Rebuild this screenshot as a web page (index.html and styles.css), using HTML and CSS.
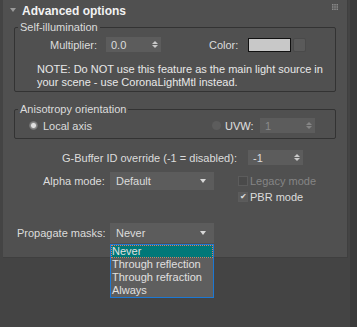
FILE: index.html
```html
<!DOCTYPE html>
<html>
<head>
<meta charset="utf-8">
<link rel="stylesheet" href="styles.css">
</head>
<body>
<div class="screen">
  <div class="panel">
    <div class="header">
      <span class="caret"></span>
      <span class="title">Advanced options</span>
      <svg class="grip" width="6" height="6" viewBox="0 0 6 6">
        <rect x="0" y="0" width="1.5" height="1.5" fill="#8a8a8a"/><rect x="2.25" y="0" width="1.5" height="1.5" fill="#8a8a8a"/><rect x="4.5" y="0" width="1.5" height="1.5" fill="#8a8a8a"/>
        <rect x="0" y="2.25" width="1.5" height="1.5" fill="#8a8a8a"/><rect x="2.25" y="2.25" width="1.5" height="1.5" fill="#8a8a8a"/><rect x="4.5" y="2.25" width="1.5" height="1.5" fill="#8a8a8a"/>
        <rect x="0" y="4.5" width="1.5" height="1.5" fill="#8a8a8a"/><rect x="2.25" y="4.5" width="1.5" height="1.5" fill="#8a8a8a"/><rect x="4.5" y="4.5" width="1.5" height="1.5" fill="#8a8a8a"/>
      </svg>
    </div>

    <fieldset class="group group-self">
      <legend>Self-illumination</legend>
      <div class="row row-mult">
        <span class="label lbl-mult">Multiplier:</span>
        <div class="spinner sp-mult"><span>0.0</span><span class="arrows"><i class="up"></i><i class="down"></i></span></div>
        <span class="label lbl-color">Color:</span>
        <div class="swatch"></div>
        <div class="mapbtn"></div>
      </div>
      <p class="note">NOTE: Do NOT use this feature as the main light source in<br>your scene - use CoronaLightMtl instead.</p>
    </fieldset>

    <fieldset class="group group-aniso">
      <legend>Anisotropy orientation</legend>
      <div class="row row-aniso">
        <span class="radio on"></span>
        <span class="label lbl-local">Local axis</span>
        <span class="radio off"></span>
        <span class="label lbl-uvw">UVW:</span>
        <div class="spinner sp-uvw disabled"><span>1</span><span class="arrows"><i class="up"></i><i class="down"></i></span></div>
      </div>
    </fieldset>

    <div class="row row-gbuf">
      <span class="label lbl-gbuf">G-Buffer ID override (-1 = disabled):</span>
      <div class="spinner sp-gbuf"><span>-1</span><span class="arrows"><i class="up"></i><i class="down"></i></span></div>
    </div>

    <div class="row row-alpha">
      <span class="label lbl-alpha">Alpha mode:</span>
      <div class="combo combo-alpha"><span>Default</span><i class="tri"></i></div>
      <div class="checks">
        <div class="check-row disabled"><span class="box"></span><span>Legacy mode</span></div>
        <div class="check-row"><span class="box checked">&#10004;</span><span>PBR mode</span></div>
      </div>
    </div>

    <div class="row row-prop">
      <span class="label lbl-prop">Propagate masks:</span>
      <div class="combo-wrap">
        <div class="combo combo-prop"><span>Never</span><i class="tri"></i></div>
        <ul class="dropdown">
          <li class="sel">Never</li>
          <li>Through reflection</li>
          <li>Through refraction</li>
          <li>Always</li>
        </ul>
      </div>
    </div>
  </div>
  <div class="strip"></div>
</div>
</body>
</html>
```

FILE: styles.css
```css
html, body {
  margin: 0;
  padding: 0;
  background: #444444;
}
body {
  width: 357px;
  height: 327px;
  overflow: hidden;
  font-family: "Liberation Sans", Arial, sans-serif;
  font-size: 11px;
  color: #dcdcdc;
}
.screen {
  display: flex;
  height: 327px;
}
.panel {
  margin-left: 3px;
  width: 345px;
  height: 258px;
  background: #505050;
  border-right: 1px solid #3f3f3f;
  border-bottom: 1px solid #3f3f3f;
  box-sizing: border-box;
}
.strip {
  margin-left: 2px;
  width: 7px;
  height: 327px;
  background: #3a3a3a;
}
.header {
  display: flex;
  align-items: center;
  height: 21px;
  padding-left: 7px;
}
.caret {
  width: 0;
  height: 0;
  border-left: 3px solid transparent;
  border-right: 3px solid transparent;
  border-top: 4px solid #9a9a9a;
  margin-right: 6px;
  margin-top: -1px;
}
.title {
  font-weight: bold;
  font-size: 12px;
  color: #f2f2f2;
  flex: 1;
  margin-top: 1px;
}
.grip {
  margin-right: 9px;
  margin-top: -8px;
}
.group {
  margin: 0 0 0 11px;
  width: 322px;
  box-sizing: border-box;
  border: 1px solid #333333;
  border-radius: 2px;
  padding: 0;
}
.group legend {
  padding: 0 2px;
  margin-left: 3px;
  line-height: 13px;
  color: #dcdcdc;
}
.group-self {
  height: 71px;
}
.row {
  display: flex;
  align-items: center;
}
.label {
  white-space: nowrap;
}
.row-mult {
  margin-top: 3px;
  height: 15px;
}
.lbl-mult { margin-left: 35px; width: 56px; }
.spinner {
  display: flex;
  align-items: center;
  justify-content: space-between;
  height: 15px;
  background: #5c5c5c;
  box-sizing: border-box;
  padding: 0 3px 0 5px;
  color: #dcdcdc;
}
.spinner.disabled { color: #8a8a8a; }
.arrows {
  display: flex;
  flex-direction: column;
  gap: 1px;
}
.arrows i {
  display: block;
  width: 0;
  height: 0;
  border-left: 3px solid transparent;
  border-right: 3px solid transparent;
}
.arrows .up { border-bottom: 3px solid #c8c8c8; }
.arrows .down { border-top: 3px solid #c8c8c8; }
.spinner.disabled .arrows .up { border-bottom-color: #858585; }
.spinner.disabled .arrows .down { border-top-color: #858585; }
.sp-mult { width: 55px; }
.lbl-color { margin-left: 48px; width: 39px; }
.swatch {
  width: 43px;
  height: 14px;
  box-sizing: border-box;
  border: 1px solid #111;
  background: #c8c8c8;
}
.mapbtn {
  width: 13px;
  height: 14px;
  margin-left: 2px;
  border-radius: 2px;
  background: #5a5a5a;
  border: 1px solid #4a4a4a;
  box-sizing: border-box;
}
.note {
  margin: 11px 0 0 22px;
  line-height: 13px;
  color: #e8e8e8;
}
.group-aniso {
  margin-top: 11px;
  height: 36px;
}
.row-aniso {
  margin-top: 2px;
  height: 15px;
}
.radio {
  width: 9px;
  height: 9px;
  border-radius: 50%;
  box-sizing: border-box;
}
.radio.on {
  margin-left: 14px;
  background: radial-gradient(circle, #e0e0e0 0 2px, #8a8a8a 3px, #5c5c5c 5px);
}
.radio.off {
  margin-left: 109px;
  background: #5c5c5c;
}
.lbl-local { margin-left: 5px; width: 60px; }
.lbl-uvw { margin-left: 4px; width: 35px; color: #e0e0e0; }
.sp-uvw { width: 55px; }
.row-gbuf {
  margin-top: 11px;
  height: 15px;
}
.lbl-gbuf { margin-left: 59px; width: 186px; }
.sp-gbuf { width: 55px; }
.row-alpha {
  margin-top: 7px;
  align-items: flex-start;
}
.lbl-alpha { margin-left: 40px; width: 67px; margin-top: 3px; }
.combo {
  display: flex;
  align-items: center;
  justify-content: space-between;
  width: 104px;
  height: 18px;
  box-sizing: border-box;
  background: #5c5c5c;
  padding: 0 8px 0 6px;
  color: #dcdcdc;
}
.tri {
  display: block;
  width: 0;
  height: 0;
  border-left: 3px solid transparent;
  border-right: 3px solid transparent;
  border-top: 4px solid #d8d8d8;
}
.checks {
  margin-left: 24px;
  margin-top: 1px;
}
.check-row {
  display: flex;
  align-items: center;
  height: 16px;
  gap: 2px;
}
.check-row.disabled { color: #858585; }
.box {
  display: block;
  width: 10px;
  height: 10px;
  box-sizing: border-box;
  border: 1px solid #5c5c5c;
  background: #4a4a4a;
  font-size: 8px;
  line-height: 8px;
  color: #e0e0e0;
  text-align: center;
}
.box.checked { background: #5a5a5a; }
.row-prop {
  margin-top: 18px;
  align-items: flex-start;
}
.lbl-prop { margin-left: 14px; width: 93px; margin-top: 4px; }
.combo-prop { height: 20px; }
.dropdown {
  list-style: none;
  margin: 1px 0 0;
  padding: 0;
  width: 104px;
  box-sizing: border-box;
  border: 1px solid #1c78d4;
  background: #5e5e5e;
}
.dropdown li {
  height: 13px;
  line-height: 13px;
  padding-left: 1px;
  color: #e0e0e0;
  white-space: nowrap;
}
.dropdown li.sel {
  background: #007878;
  outline: 1px dotted #e07860;
  outline-offset: -1px;
}
```
